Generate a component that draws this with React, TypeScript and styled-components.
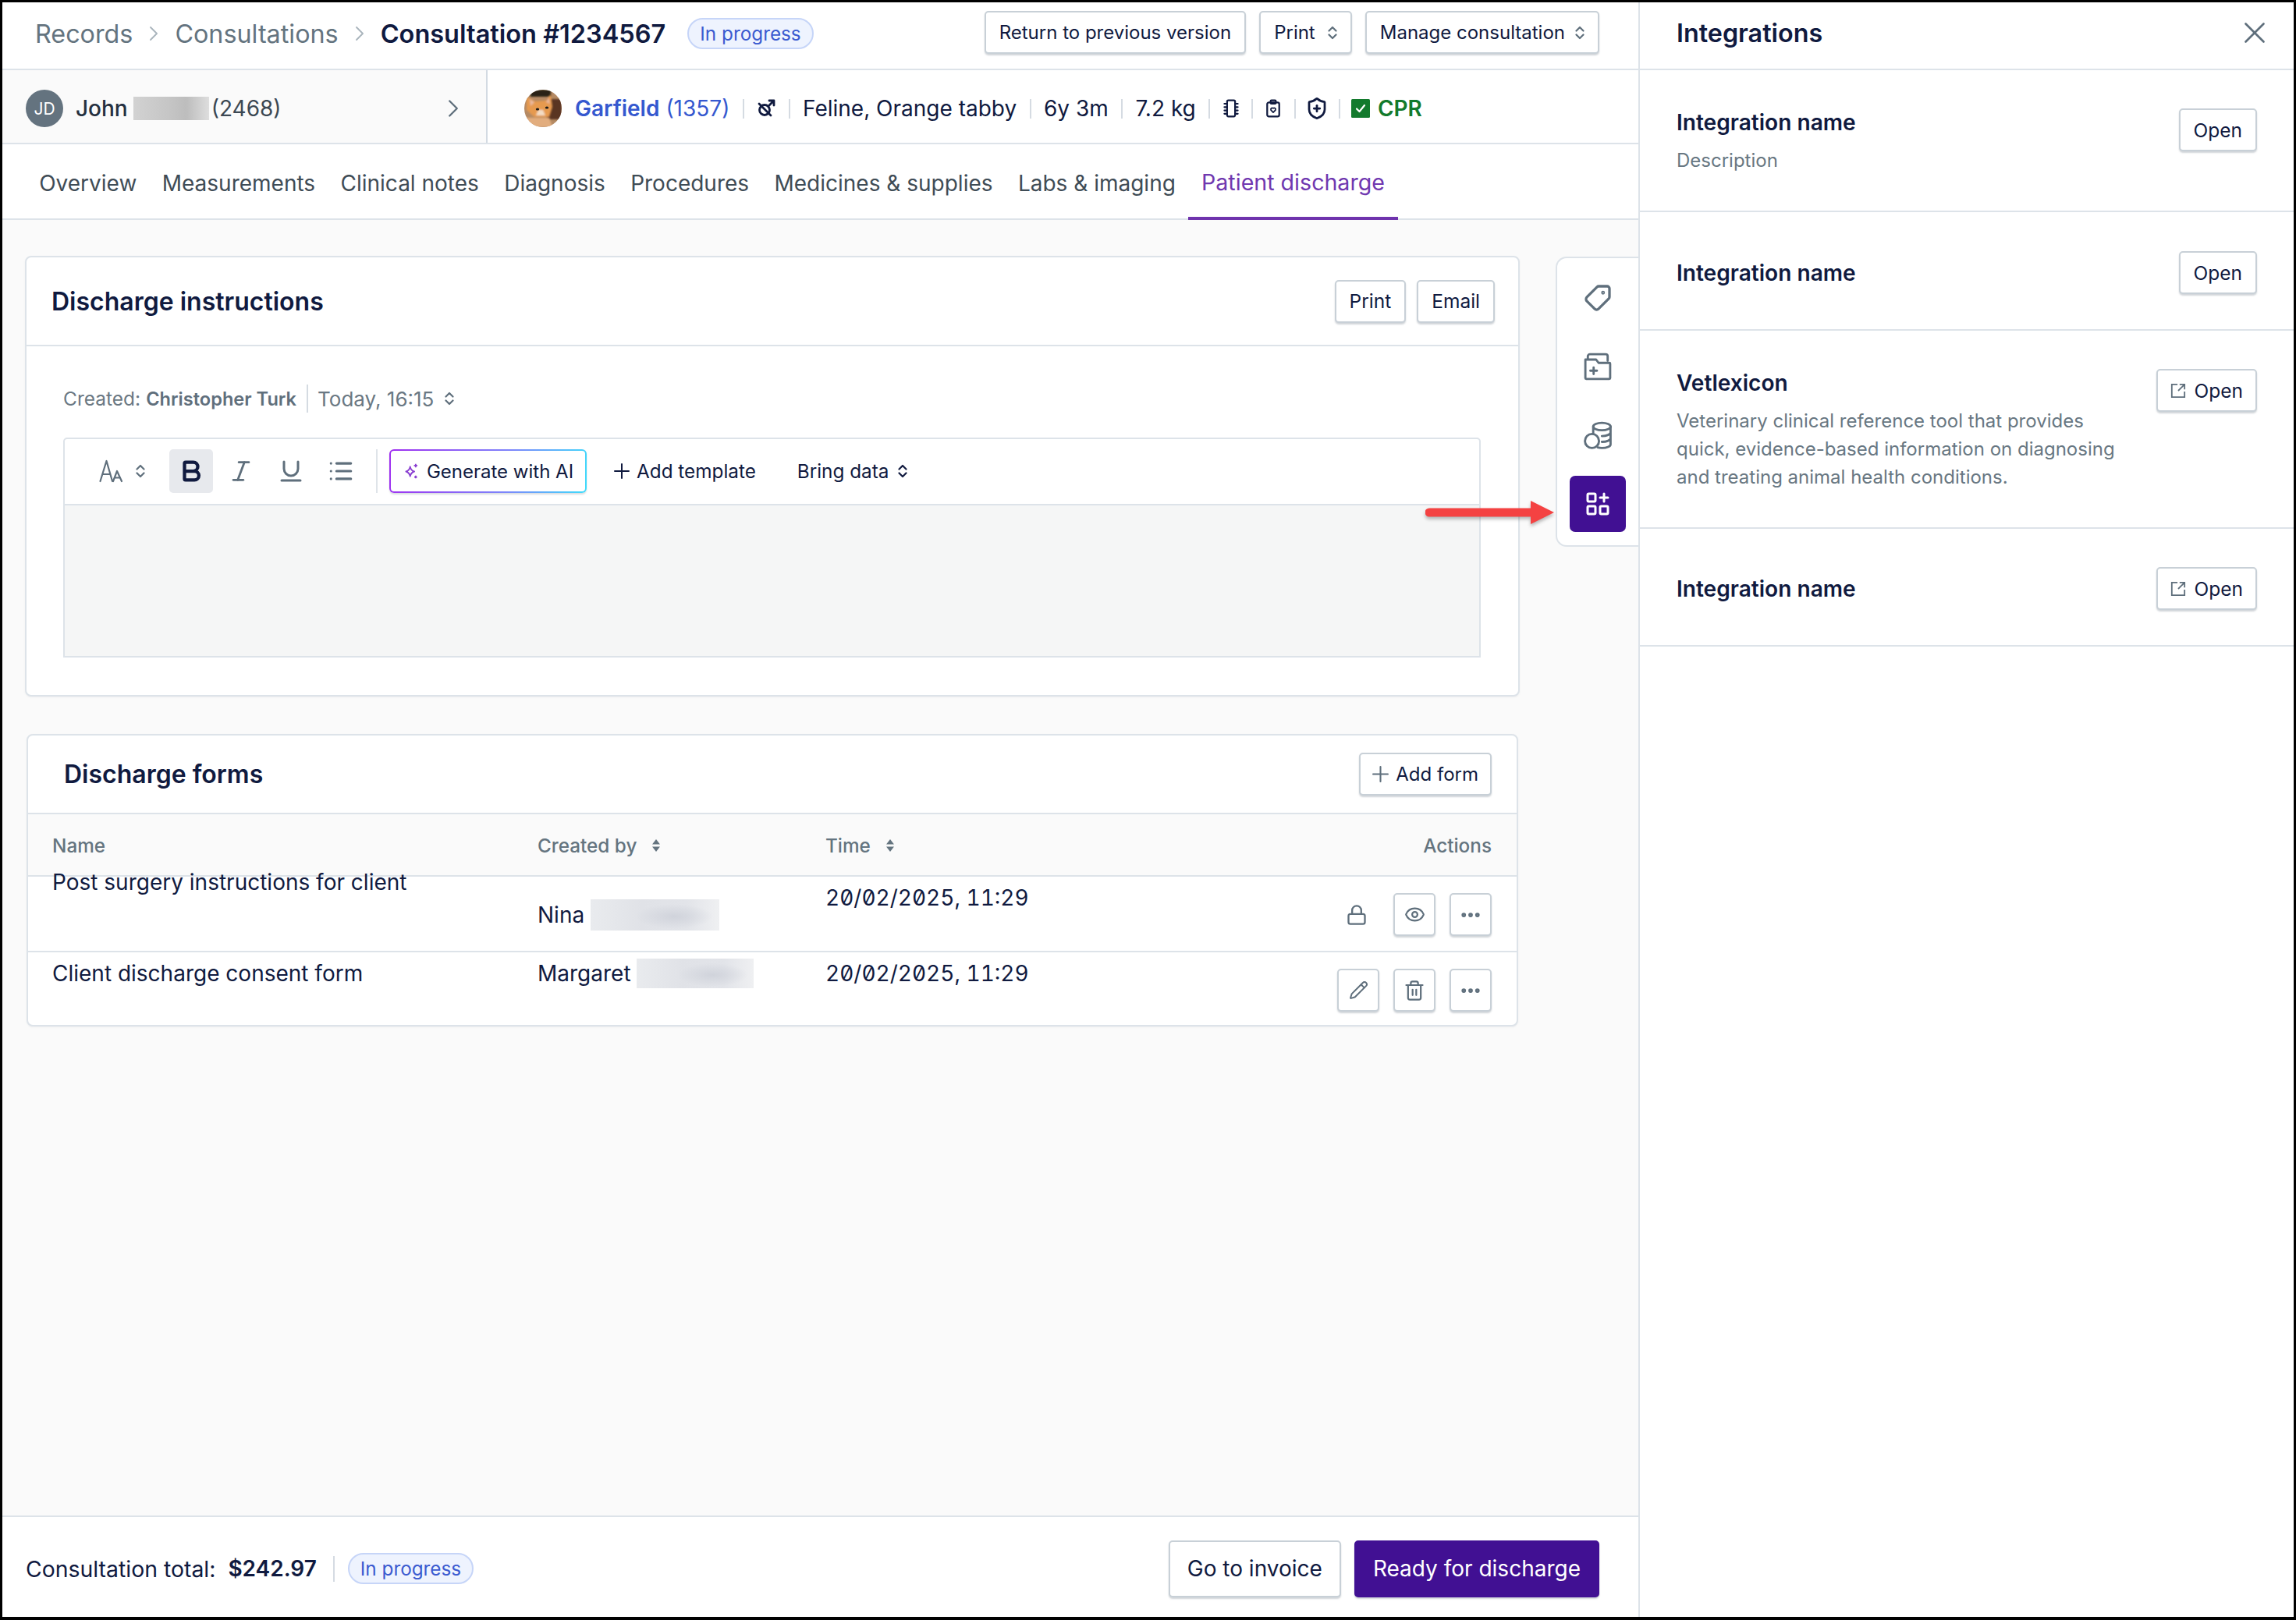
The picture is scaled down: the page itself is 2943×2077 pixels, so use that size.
import React from 'react';
import styled, { createGlobalStyle } from 'styled-components';
import { Tag, Bold, Italic, Underline, List, Lock, Eye, Pencil, Trash2, Ellipsis, X, ChevronRight, ShieldPlus } from 'lucide-react';

const Global = createGlobalStyle`
  html, body { margin: 0; padding: 0; background: #fff; }
  * { box-sizing: border-box; }
  body { font-family: Inter, "Liberation Sans", sans-serif; color: #101a3f; }
`;

const navy = '#101a3f';
const gray = '#5f6f7c';
const line = '#dde3e9';

const Page = styled.div`
  width: 2943px; height: 2077px; display: flex; overflow: hidden; position: relative;
  border-style: solid; border-color: #000; border-width: 3px 3px 4px 3px; background: #fff;
`;
const Main = styled.div`width: 2097px; height: 100%; display: flex; flex-direction: column;`;
const TopBar = styled.div`
  height: 87px; flex: none; border-bottom: 2px solid ${line}; display: flex; align-items: center;
  padding: 0 50px 5px 42px;
`;
const Crumb = styled.span`font-size: 32.3px; color: #64747f;`;
const CrumbSep = styled.span`display: flex; color: #a9b4bc; margin: 0 11px;`;
const CrumbNow = styled.span`font-size: 32.5px; font-weight: 600; color: ${navy};`;
const Badge = styled.span`
  display: inline-flex; align-items: center; height: 40px; padding: 0 14px; border-radius: 20px;
  background: #eef3fe; border: 2px solid #c6d5f8; color: #3b5bd0; font-size: 24.3px;
`;
const CrumbBadge = styled(Badge)`margin-left: 28px;`;
const Spacer = styled.div`flex: 1;`;
const Btn = styled.button<{ $h?: number; $px?: number; $fs?: number; $gap?: number }>`
  display: inline-flex; align-items: center; justify-content: center; gap: ${p => p.$gap ?? 11}px; height: ${p => p.$h ?? 55}px;
  padding: 0 ${p => p.$px ?? 17}px; font: 400 ${p => p.$fs ?? 24.5}px Inter, sans-serif; color: ${navy};
  background: #fff; border: 2px solid #c8d0d7; border-radius: 5px; box-shadow: 0 2px 2px rgba(90,105,120,.28);
  white-space: nowrap;
`;
const TopActions = styled.div`display: flex; gap: 17px; margin-bottom: 3px;`;
const PatientBar = styled.div`height: 95px; flex: none; border-bottom: 2px solid ${line}; display: flex;`;
const ClientCell = styled.div`
  width: 622px; flex: none; background: #fafafa; border-right: 2px solid #d3dae2;
  display: flex; align-items: center; padding: 5px 0 0 30px; font-size: 28px;
`;
const Initials = styled.span`
  width: 48px; height: 48px; border-radius: 50%; background: #64737f; color: #fff; font-size: 21px;
  display: flex; align-items: center; justify-content: center; flex: none;
`;
const ClientFirst = styled.span`font-weight: 500; margin-left: 16px; color: #25303f;`;
const ClientBlur = styled.span`
  width: 97px; height: 30px; margin: 0 3px 0 7px;
  background: linear-gradient(90deg, #d2d2d2, #c6c6c6 45%, #bdbdbd 70%, #dedede);
`;
const ClientId = styled.span`color: #3c4853; flex: 1;`;
const ClientChevron = styled.span`display: flex; color: #5f6f7c; margin-right: 23px;`;
const PetCell = styled.div`flex: 1; display: flex; align-items: center; padding: 5px 0 0 47px; font-size: 28px;`;
const PetName = styled.span`color: #3558cf; font-weight: 600; margin-left: 17px;`;
const PetId = styled.span`color: #3558cf; margin-left: 8px;`;
const Sep = styled.span`width: 2px; height: 25px; background: #d5dbe2; margin: 0 16.4px;`;
const ShieldWrap = styled.span`display: flex; margin: 0 -4px;`;
const Cpr = styled.span`display: flex; align-items: center; gap: 10px; color: #137a2d; font-weight: 600; margin-left: -2px;`;
const Tabs = styled.div`height: 97px; flex: none; border-bottom: 2px solid ${line}; display: flex; padding-left: 31px;`;
const TabItem = styled.div<{ $on?: boolean }>`
  padding: ${p => (p.$on ? 4 : 2)}px ${p => (p.$on ? 17 : 16.2)}px 0; height: 97px; display: flex; align-items: center;
  font-size: ${p => (p.$on ? 28.6 : 28)}px;
  color: ${p => (p.$on ? '#7038b0' : '#3f4c56')};
  border-bottom: ${p => (p.$on ? '4px solid #6f33ad' : 'none')};
`;
const Canvas = styled.div`flex: 1; background: #fafafa; display: flex; min-height: 0; position: relative;`;
const Cards = styled.div`width: 1991px; flex: none; padding: 46px 0 0 29px;`;
const Card = styled.div<{ $ml?: number; $w: number; $h: number; $mt?: number }>`
  width: ${p => p.$w}px; height: ${p => p.$h}px; margin-left: ${p => p.$ml ?? 0}px; margin-top: ${p => p.$mt ?? 0}px;
  background: #fff; border: 2px solid ${line}; border-radius: 8px; box-shadow: 0 1px 2px rgba(120,130,140,.1);
`;
const CardHead = styled.div<{ $pl: number; $pr: number; $h: number }>`
  height: ${p => p.$h}px; border-bottom: 2px solid ${line}; display: flex; align-items: center;
  justify-content: space-between; padding: 0 ${p => p.$pr}px 0 ${p => p.$pl}px;
`;
const CardTitle = styled.h2`margin: 0; font-size: 32px; font-weight: 600; color: ${navy};`;
const BtnRow = styled.div`display: flex; gap: 14px;`;
const CardBody = styled.div`padding: 49px 47px 0 47px;`;
const CreatedRow = styled.div`display: flex; align-items: center; font-size: 24.5px; color: #6a7883; height: 36px;`;
const Bold_ = styled.b`font-weight: 600; font-size: 23.6px; margin-left: 7px; color: #5f6f7c;`;
const MiniSep = styled.span`width: 2px; height: 36px; background: #d5dbe2; margin: 0 12px 0 13px;`;
const TodayText = styled.span`font-size: 26px;`;
const Chev = styled.span`display: flex; margin-left: 14px;`;
const Editor = styled.div`
  width: 1817px; height: 282px; margin-top: 32px; border: 2px solid ${line}; border-radius: 5px 5px 0 0; overflow: hidden;
`;
const Toolbar = styled.div`height: 85px; border-bottom: 2px solid ${line}; display: flex; align-items: flex-start; padding: 13px 0 0 43px;`;
const ToolBtn = styled.span<{ $on?: boolean; $w?: number; $ml?: number }>`
  width: ${p => p.$w ?? 56}px; height: 56px; margin-left: ${p => p.$ml ?? 0}px; display: flex; align-items: center; justify-content: center;
  border-radius: 5px; background: ${p => (p.$on ? '#e7e9ed' : 'transparent')}; color: ${p => (p.$on ? navy : gray)}; flex: none;
`;
const ToolSep = styled.span`width: 2px; height: 56px; background: #dfe4e9; margin: 0 15px 0 17px; flex: none;`;
const GenBtn = styled.span`
  position: relative; height: 56px; width: 253px; border-radius: 6px; padding: 2px; flex: none;
  background: linear-gradient(100deg, #a02ff0, #7d86fb 60%, #3fdcfb); box-shadow: 0 2px 2px rgba(90,105,120,.22);
`;
const GenInner = styled.span`
  height: 52px; border-radius: 4px; background: #fff; display: flex; align-items: center; justify-content: center; gap: 8px;
  font-size: 24px; color: ${navy};
`;
const TextTool = styled.span<{ $ml: number; $gap: number }>`
  height: 56px; display: flex; align-items: center; gap: ${p => p.$gap}px; margin-left: ${p => p.$ml}px; font-size: 24.3px; color: ${navy}; flex: none;
`;
const EditorArea = styled.div`height: 195px; background: #f5f6f6;`;
const Head = styled.div`
  display: grid; grid-template-columns: 622px 369px 1fr auto; height: 80px; align-items: center; padding: 2px 32px 0 31px;
  border-bottom: 2px solid ${line}; background: #fafafa; font-size: 24.3px; font-weight: 500; color: #64747f;
`;
const HeadCell = styled.div`display: flex; align-items: center; gap: 19px;`;
const Row = styled.div<{ $last?: boolean }>`
  display: grid; grid-template-columns: 622px 369px 1fr auto; height: ${p => (p.$last ? 93 : 97)}px; padding: 0 32px 0 31px;
  border-bottom: ${p => (p.$last ? 'none' : `2px solid ${line}`)}; font-size: 28px; color: ${navy};
`;
const Cell = styled.div<{ $mt: number }>`display: flex; align-items: flex-start; margin-top: ${p => p.$mt}px; height: 36px; line-height: 36px; white-space: nowrap;`;
const Who = styled(Cell)`align-items: center;`;
const DateText = styled(Cell)`font-feature-settings: "tnum", "zero";`;
const Blur = styled.span<{ $w: number; $h: number; $ml: number }>`
  display: inline-block; width: ${p => p.$w}px; height: ${p => p.$h}px; margin-left: ${p => p.$ml}px; flex: none;
  background: radial-gradient(ellipse 30% 40% at 65% 55%, #d0d3db, transparent), linear-gradient(90deg, #e9ebee, #e0e2e7 40%, #e2e4e9 75%, #eff0f2);
`;
const Actions = styled.div<{ $mt: number }>`display: flex; align-items: center; gap: 18px; margin-top: ${p => p.$mt}px; height: 55px;`;
const IconBtn = styled(Btn)`width: 54px; padding: 0; color: ${gray};`;
const LockIcon = styled.span`display: flex; color: ${gray}; margin-right: 15px;`;
const SideDock = styled.div`
  width: 106px; height: 372px; margin-top: 47px; flex: none; background: #fff; border: 2px solid ${line}; border-right: none;
  border-radius: 14px 0 0 14px; display: flex; flex-direction: column; align-items: center; padding-top: 15px;
`;
const DockBtn = styled.span<{ $on?: boolean }>`
  width: 72px; height: 72px; margin-bottom: ${p => (p.$on ? 0 : 16)}px; display: flex; align-items: center; justify-content: center;
  border-radius: 7px; color: ${p => (p.$on ? '#fff' : gray)}; background: ${p => (p.$on ? '#411093' : 'transparent')};
`;
const Arrow = styled.svg`position: absolute; left: 1824px; top: 358px; filter: drop-shadow(0 3px 2px rgba(0,0,0,.28));`;
const Footer = styled.div`
  height: 130px; flex: none; border-top: 2px solid ${line}; display: flex; align-items: center; padding: 4px 50px 0 30px; font-size: 28.4px;
`;
const Total = styled.b`font-size: 28px; font-weight: 600; margin-left: 16px;`;
const FooterSep = styled.span`width: 2px; height: 33px; background: #d5dbe2; margin: 0 17px 0 21px;`;
const BigBtn = styled(Btn)`height: 73px; font-size: 28px;`;
const PrimaryBtn = styled(BigBtn)`background: #411093; color: #fff; border-color: #411093; margin-left: 17px;`;
const Panel = styled.aside`width: 840px; flex: none; height: 100%; border-left: 2px solid ${line}; display: flex; flex-direction: column;`;
const PanelHead = styled.div`
  height: 87px; flex: none; border-bottom: 2px solid ${line}; display: flex; align-items: center; justify-content: space-between;
  padding: 0 27px 7px 47px;
`;
const PanelTitle = styled.h2`margin: 0; font-size: 32.3px; font-weight: 600; color: ${navy};`;
const CloseIcon = styled.span`display: flex; color: ${gray};`;
const IntRow = styled.div<{ $h: number; $pt: number }>`
  height: ${p => p.$h}px; flex: none; border-bottom: 2px solid ${line}; display: flex; align-items: flex-start; justify-content: space-between;
  padding: ${p => p.$pt}px 47px 0 47px;
`;
const IntText = styled.div<{ $mt: number }>`margin-top: ${p => p.$mt}px; width: 570px;`;
const IntName = styled.div`font-size: 28.1px; font-weight: 600; color: ${navy}; line-height: 36px;`;
const IntDesc = styled.div<{ $mt: number }>`font-size: 24px; color: #687782; line-height: 36px; margin-top: ${p => p.$mt}px;`;

const Updown = ({ c = gray }: { c?: string }) => (
  <svg width="12" height="18" viewBox="0 0 12 18" fill="none" stroke={c} strokeWidth="2.2" strokeLinecap="round" strokeLinejoin="round">
    <path d="M1.5 6.5 6 2l4.5 4.5M1.5 11.5 6 16l4.5-4.5" />
  </svg>
);
const Sort = () => (
  <svg width="12" height="18" viewBox="0 0 12 18" fill="#64747f"><path d="M6 1l5 6.5H1zM6 17l5-6.5H1z" /></svg>
);
const PlusIcon = ({ c, s }: { c: string; s: number }) => (
  <svg width={s} height={s} viewBox="0 0 20 20" fill="none" stroke={c} strokeWidth="2" strokeLinecap="round">
    <path d="M10 1v18M1 10h18" />
  </svg>
);
const CatAvatar = () => (
  <svg width="48" height="48" viewBox="0 0 48 48" style={{ flex: 'none' }}>
    <defs>
      <clipPath id="cat"><circle cx="24" cy="24" r="24" /></clipPath>
      <filter id="soft"><feGaussianBlur stdDeviation="0.9" /></filter>
    </defs>
    <g clipPath="url(#cat)">
      <rect width="48" height="48" fill="#b58a64" />
      <rect x="29" y="12" width="19" height="26" fill="#5a3524" filter="url(#soft)" />
      <rect x="8" y="0" width="26" height="9" fill="#2c2018" filter="url(#soft)" />
      <g filter="url(#soft)">
        <path d="M3 9l11 6 13-1 7-8 2 16-4 13H13L3 26z" fill="#e69a50" />
        <path d="M0 36h32l4 12H0z" fill="#e2ad7e" />
        <path d="M7 12l6 4-5 5zM31 10l-3 6 5 2z" fill="#e8b9a0" />
        <path d="M18 26l6 0 3 7h-12z" fill="#f3dcc4" />
      </g>
      <ellipse cx="17" cy="25" rx="2.2" ry="1.6" fill="#1d1a18" />
      <ellipse cx="29" cy="23" rx="2.2" ry="1.6" fill="#1d1a18" />
    </g>
  </svg>
);
const Neuter = () => (
  <svg width="24" height="24" viewBox="0 0 24 24" fill="none" stroke={navy} strokeWidth="2.8" strokeLinecap="round" strokeLinejoin="round">
    <circle cx="10" cy="14" r="6.5" />
    <path d="M15 9l7-7M16 2h6v6M3 6l15 15" />
  </svg>
);
const Chip = () => (
  <svg width="20" height="24" viewBox="0 0 22 28" fill="none" stroke={navy} strokeWidth="2.6" strokeLinecap="round">
    <rect x="5" y="2" width="12" height="24" rx="2" />
    <path d="M1 7h4M1 12h4M1 17h4M1 22h4M17 7h4M17 12h4M17 17h4M17 22h4" />
  </svg>
);
const ClipHeart = () => (
  <svg width="20" height="24" viewBox="0 0 22 28" fill="none" stroke={navy} strokeWidth="2.6" strokeLinejoin="round">
    <rect x="2" y="5" width="18" height="21" rx="2.5" />
    <rect x="7" y="2" width="8" height="5" rx="1.5" />
    <path d="M11 20l-3.4-3.6a2.2 2.2 0 0 1 3.4-2.6 2.2 2.2 0 0 1 3.4 2.6z" strokeWidth="2" />
  </svg>
);
const CheckBox = () => (
  <svg width="24" height="24" viewBox="0 0 24 24"><rect width="24" height="24" rx="1.5" fill="#137a2d" />
    <path d="M7 12.5l3.5 3.5 6.5-8" stroke="#fff" strokeWidth="2.2" fill="none" strokeLinecap="round" strokeLinejoin="round" /></svg>
);
const AaIcon = () => (
  <svg width="32" height="30" viewBox="0 0 32 30" fill="none" stroke={gray} strokeWidth="2.2" strokeLinecap="round" strokeLinejoin="round">
    <path d="M1.5 28 9.5 2 17 28M4.5 19h10M18 28l5-13 6 13M20 23.5h7" />
  </svg>
);
const Sparkle = () => (
  <svg width="23" height="23" viewBox="0 0 22 26" fill="none" stroke="#8a3fd1" strokeWidth="2.1" strokeLinejoin="round">
    <path d="M9 6c.8 4 2.2 5.8 6 7-3.8 1.2-5.2 3-6 7-.8-4-2.2-5.8-6-7 3.8-1.2 5.2-3 6-7z" />
    <path d="M17 2v5M14.5 4.5h5M17 19v4M15 21h4" strokeWidth="2" />
  </svg>
);
const FolderPlusIcon = () => (
  <svg width="36" height="36" viewBox="0 0 34 34" fill="none" stroke={gray} strokeWidth="2.7" strokeLinecap="round" strokeLinejoin="round">
    <path d="M5 8V4.5A2.5 2.5 0 0 1 7.5 2h19A2.5 2.5 0 0 1 29 4.5V10" />
    <path d="M2 8.5h13l3 4h13a1 1 0 0 1 1 1V31a1 1 0 0 1-1 1H3a1 1 0 0 1-1-1z" />
    <path d="M12 18v8M8 22h8" />
  </svg>
);
const CoinsIcon = () => (
  <svg width="36" height="36" viewBox="0 0 34 34" fill="none" stroke={gray} strokeWidth="2.7" strokeLinecap="round" strokeLinejoin="round">
    <ellipse cx="22" cy="6.5" rx="10.5" ry="4.5" />
    <path d="M11.5 6.5v11M32.5 6.5V28c0 2.5-4.5 4.5-10.5 4.5-2 0-3.5-.2-5-.7M32.5 13.5c0 2.5-4.5 4.5-10.5 4.5M32.5 20.5c0 2.5-4.5 4.5-10.5 4.5" />
    <circle cx="10" cy="24" r="8.5" fill="#fff" />
  </svg>
);
const AppsPlus = () => (
  <svg width="30" height="30" viewBox="0 0 30 30" fill="none" stroke="#fff" strokeWidth="3" strokeLinecap="round" strokeLinejoin="round">
    <rect x="2" y="2" width="10" height="10" rx="1.5" />
    <rect x="2" y="18" width="10" height="10" rx="1.5" />
    <rect x="18" y="18" width="10" height="10" rx="1.5" />
    <path d="M23 2v10M18 7h10" />
  </svg>
);
const External = () => (
  <svg width="20" height="20" viewBox="0 0 22 22" fill="none" stroke={gray} strokeWidth="2">
    <path d="M10 2H2v18h18v-8M13 2h7v7M20 2l-9 9" />
  </svg>
);

export default function App() {
  return (
    <Page>
      <Global />
      <Main>
        <TopBar>
          <Crumb>Records</Crumb>
          <CrumbSep><ChevronRight size={32} strokeWidth={1.4} /></CrumbSep>
          <Crumb>Consultations</Crumb>
          <CrumbSep><ChevronRight size={32} strokeWidth={1.4} /></CrumbSep>
          <CrumbNow>Consultation #1234567</CrumbNow>
          <CrumbBadge>In progress</CrumbBadge>
          <Spacer />
          <TopActions>
            <Btn $fs={24}>Return to previous version</Btn>
            <Btn $fs={24} $gap={16}>Print <Updown /></Btn>
            <Btn $fs={24} $gap={13}>Manage consultation <Updown /></Btn>
          </TopActions>
        </TopBar>
        <PatientBar>
          <ClientCell>
            <Initials>JD</Initials>
            <ClientFirst>John</ClientFirst>
            <ClientBlur />
            <ClientId>(2468)</ClientId>
            <ClientChevron><ChevronRight size={38} strokeWidth={1.5} /></ClientChevron>
          </ClientCell>
          <PetCell>
            <CatAvatar />
            <PetName>Garfield</PetName><PetId>(1357)</PetId>
            <Sep /><Neuter /><Sep />
            <span>Feline, Orange tabby</span>
            <Sep /><span>6y 3m</span>
            <Sep /><span>7.2 kg</span>
            <Sep /><Chip />
            <Sep /><ClipHeart />
            <Sep /><ShieldWrap><ShieldPlus size={30} color={navy} strokeWidth={2.2} /></ShieldWrap>
            <Sep />
            <Cpr><CheckBox />CPR</Cpr>
          </PetCell>
        </PatientBar>
        <Tabs>
          {['Overview', 'Measurements', 'Clinical notes', 'Diagnosis', 'Procedures', 'Medicines & supplies', 'Labs & imaging'].map(t => (
            <TabItem key={t}>{t}</TabItem>
          ))}
          <TabItem $on>Patient discharge</TabItem>
        </Tabs>
        <Canvas>
          <Cards>
            <Card $w={1916} $h={565}>
              <CardHead $pl={32} $pr={30} $h={114}>
                <CardTitle>Discharge instructions</CardTitle>
                <BtnRow>
                  <Btn>Print</Btn>
                  <Btn>Email</Btn>
                </BtnRow>
              </CardHead>
              <CardBody>
                <CreatedRow>
                  Created: <Bold_>Christopher Turk</Bold_>
                  <MiniSep />
                  <TodayText>Today, 16:15</TodayText>
                  <Chev><Updown /></Chev>
                </CreatedRow>
                <Editor>
                  <Toolbar>
                    <ToolBtn $w={34}><AaIcon /></ToolBtn>
                    <ToolBtn $w={16} $ml={12}><Updown /></ToolBtn>
                    <ToolBtn $on $ml={29}><Bold size={34} strokeWidth={3} /></ToolBtn>
                    <ToolBtn $ml={8}><Italic size={34} strokeWidth={2} /></ToolBtn>
                    <ToolBtn $ml={8}><Underline size={36} strokeWidth={2} /></ToolBtn>
                    <ToolBtn $ml={8}><List size={34} strokeWidth={2.2} /></ToolBtn>
                    <ToolSep />
                    <GenBtn><GenInner><Sparkle />Generate with AI</GenInner></GenBtn>
                    <TextTool $ml={35} $gap={9}><PlusIcon c={navy} s={20} />Add template</TextTool>
                    <TextTool $ml={53} $gap={12}>Bring data <Updown c={navy} /></TextTool>
                  </Toolbar>
                  <EditorArea />
                </Editor>
              </CardBody>
            </Card>
            <Card $ml={2} $mt={48} $w={1912} $h={375}>
              <CardHead $pl={46} $pr={32} $h={101}>
                <CardTitle>Discharge forms</CardTitle>
                <Btn $fs={24} $px={15} $gap={9}><PlusIcon c={gray} s={21} />Add form</Btn>
              </CardHead>
              <Head>
                <HeadCell>Name</HeadCell>
                <HeadCell>Created by <Sort /></HeadCell>
                <HeadCell>Time <Sort /></HeadCell>
                <HeadCell>Actions</HeadCell>
              </Head>
              <Row>
                <Cell $mt={-11}>Post surgery instructions for client</Cell>
                <Who $mt={31}>Nina<Blur $w={165} $h={40} $ml={8} /></Who>
                <DateText $mt={9}>20/02/2025, 11:29</DateText>
                <Actions $mt={21}>
                  <LockIcon><Lock size={28} strokeWidth={2} /></LockIcon>
                  <IconBtn><Eye size={27} strokeWidth={2} /></IconBtn>
                  <IconBtn><Ellipsis size={30} strokeWidth={2.6} /></IconBtn>
                </Actions>
              </Row>
              <Row $last>
                <Cell $mt={9}>Client discharge consent form</Cell>
                <Who $mt={9}>Margaret<Blur $w={150} $h={38} $ml={7} /></Who>
                <DateText $mt={9}>20/02/2025, 11:29</DateText>
                <Actions $mt={21}>
                  <IconBtn><Pencil size={25} strokeWidth={1.9} /></IconBtn>
                  <IconBtn><Trash2 size={28} strokeWidth={1.9} /></IconBtn>
                  <IconBtn><Ellipsis size={30} strokeWidth={2.6} /></IconBtn>
                </Actions>
              </Row>
            </Card>
          </Cards>
          <SideDock>
            <DockBtn><Tag size={36} strokeWidth={2.2} style={{ transform: 'scaleX(-1)' }} /></DockBtn>
            <DockBtn><FolderPlusIcon /></DockBtn>
            <DockBtn><CoinsIcon /></DockBtn>
            <DockBtn $on><AppsPlus /></DockBtn>
          </SideDock>
          <Arrow width="166" height="34" viewBox="0 0 166 34">
            <path d="M5 11.5h130V2l30 15-30 15V22.5H5a5.5 5.5 0 0 1 0-11z" fill="#f44242" />
          </Arrow>
        </Canvas>
        <Footer>
          <span>Consultation total:</span>
          <Total>$242.97</Total>
          <FooterSep />
          <Badge>In progress</Badge>
          <Spacer />
          <BigBtn $px={22}>Go to invoice</BigBtn>
          <PrimaryBtn $px={22}>Ready for discharge</PrimaryBtn>
        </Footer>
      </Main>
      <Panel>
        <PanelHead>
          <PanelTitle>Integrations</PanelTitle>
          <CloseIcon><X size={46} strokeWidth={1.4} /></CloseIcon>
        </PanelHead>
        <IntRow $h={182} $pt={49}>
          <IntText $mt={0}>
            <IntName>Integration name</IntName>
            <IntDesc $mt={13}>Description</IntDesc>
          </IntText>
          <Btn>Open</Btn>
        </IntRow>
        <IntRow $h={152} $pt={50}>
          <IntText $mt={10}><IntName>Integration name</IntName></IntText>
          <Btn>Open</Btn>
        </IntRow>
        <IntRow $h={254} $pt={49}>
          <IntText $mt={0}>
            <IntName>Vetlexicon</IntName>
            <IntDesc $mt={13}>Veterinary clinical reference tool that provides quick, evidence-based information on diagnosing and treating animal health conditions.</IntDesc>
          </IntText>
          <Btn $px={16}><External />Open</Btn>
        </IntRow>
        <IntRow $h={151} $pt={49}>
          <IntText $mt={10}><IntName>Integration name</IntName></IntText>
          <Btn $px={16}><External />Open</Btn>
        </IntRow>
      </Panel>
    </Page>
  );
}
